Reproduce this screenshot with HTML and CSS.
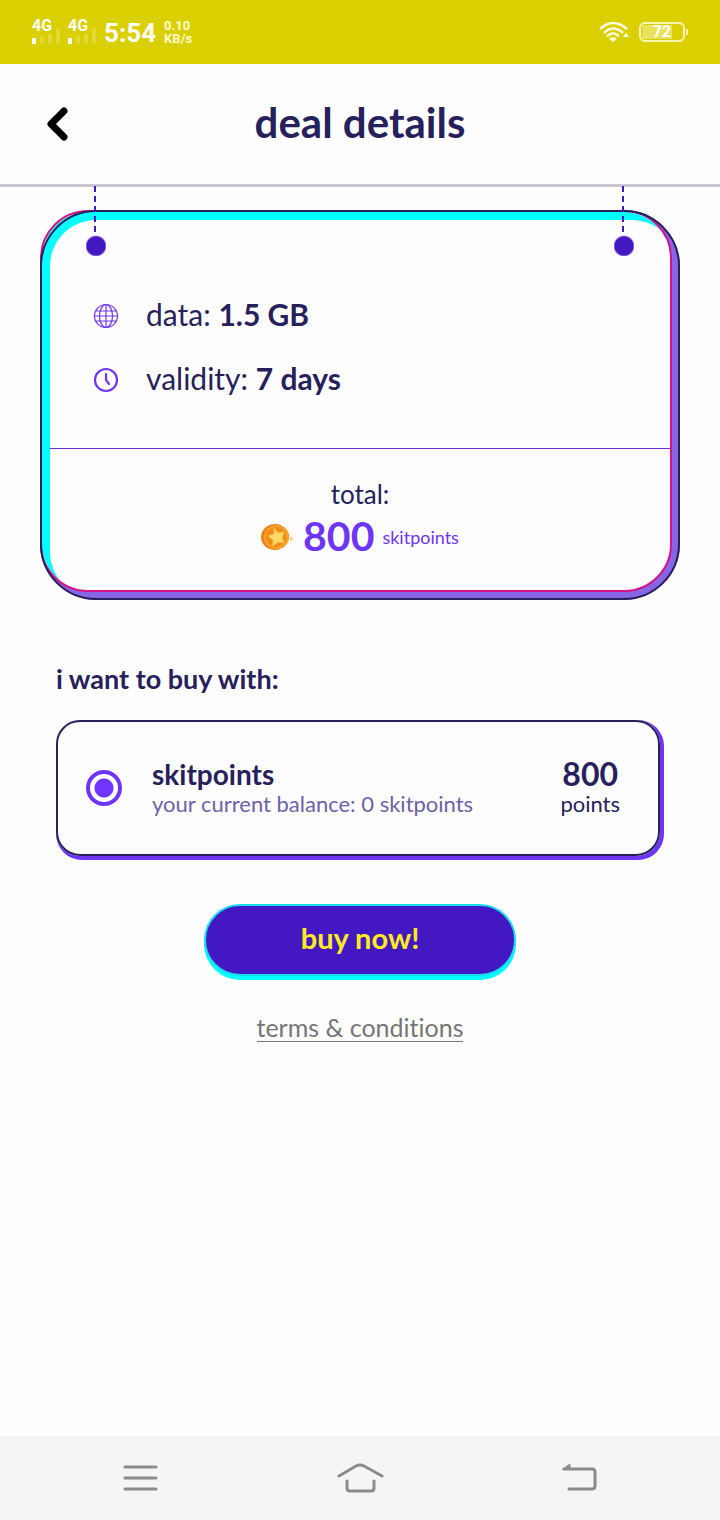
FILE: index.html
```
<!DOCTYPE html>
<html lang="en">
<head>
  <meta charset="UTF-8" />
  <meta name="viewport" content="width=device-width, initial-scale=1.0">
  <title>deal details</title>
  <link rel="stylesheet" href="styles.css">
</head>
<body>
  <div class="status-bar">
    <div class="status-left">
      <div class="signal">
        <span>4G</span>
        <svg width="28" height="18" viewBox="0 0 28 18" fill="#fff"><rect y="12" width="4" height="6"/><g opacity=".22"><rect x="8" y="10" width="4" height="8"/><rect x="16" y="8" width="4" height="10"/><rect x="24" y="2" width="4" height="16"/></g></svg>
      </div>
      <div class="signal">
        <span>4G</span>
        <svg width="28" height="18" viewBox="0 0 28 18" fill="#fff"><rect y="12" width="4" height="6"/><g opacity=".22"><rect x="8" y="10" width="4" height="8"/><rect x="16" y="8" width="4" height="10"/><rect x="24" y="2" width="4" height="16"/></g></svg>
      </div>
      <span class="clock">5:54</span>
      <span class="speed">0.10<br>KB/s</span>
    </div>
    <div class="status-right">
      <svg width="32" height="22" viewBox="0 0 32 22" fill="none" stroke="#fffde0" stroke-width="2.400">
        <path d="M1 8Q14 -4 28 8M5 12Q14 3 24 12M8 15.500Q14 9 20 15.500"/>
        <path d="M10 17.500Q14 15 18 17.500L14 21Z" fill="#fffde0" stroke="none"/>
        <path d="M24 16L27 11.500L30 16Z" fill="#fffde0" stroke="none"/>
      </svg>
      <div class="battery"><span>72</span></div>
    </div>
  </div>

  <header>
    <button class="back" aria-label="Back">
      <svg width="24" height="36" viewBox="0 0 24 36" fill="none" stroke="#000" stroke-width="7" stroke-linecap="round" stroke-linejoin="round"><path d="M20 5L7 18L20 31" /></svg>
    </button>
    <h1>deal details</h1>
  </header>

  <main>
    <section class="deal-card">
      <div class="pin pin-left"></div>
      <div class="pin pin-right"></div>
      <div class="deal-inner">
        <ul class="features">
          <li>
            <svg width="26" height="26" viewBox="0 0 26 26" fill="none" stroke="#6f35f5" stroke-width="1.200"><circle cx="13" cy="13" r="11.500"/><ellipse cx="13" cy="13" rx="6.500" ry="11.500"/><path d="M13 1.500V24.500M1.500 13H24.500M3 8H23M3 18H23"/></svg>
            <span>data: <strong>1.5 GB</strong></span>
          </li>
          <li>
            <svg width="26" height="26" viewBox="0 0 26 26" fill="none" stroke="#6f35f5" stroke-width="2.200" stroke-linecap="round"><circle cx="13" cy="13" r="11"/><path d="M13 7V13L16 17"/></svg>
            <span>validity: <strong>7 days</strong></span>
          </li>
        </ul>
        <div class="total">
          <p class="total-label">total:</p>
          <p class="total-price">
            <svg width="34" height="28" viewBox="0 0 34 28">
              <ellipse cx="14" cy="14" rx="14" ry="13" fill="#e8821a"/>
              <ellipse cx="15.500" cy="14" rx="12.500" ry="12" fill="#f8a22c"/>
              <ellipse cx="15" cy="14" rx="10" ry="10" fill="#ef8b18"/>
              <path d="M13 5L17 10L23 9L21 15L23 20L17 19L12 23L12 17L7 13L13 11Z" fill="#ffd966" stroke="#ffc247" stroke-width="1" stroke-linejoin="round"/>
              <path d="M19 26A13 12 0 0 0 28 17" fill="none" stroke="#fff0bd" stroke-width="1" stroke-dasharray="2 1"/>
              <path d="M30 13L31 15L33 16L31 17L30 19L29 17L28 16L29 15ZM29 10h1v1h-1Z" fill="#f3cf87"/>
            </svg>
            <strong>800</strong>
            <span>skitpoints</span>
          </p>
        </div>
      </div>
    </section>

    <form class="buy-form">
      <h2>i want to buy with:</h2>
      <label class="option">
        <input type="radio" name="method" value="skitpoints" checked>
        <span class="option-name"><strong>skitpoints</strong><small>your current balance: 0 skitpoints</small></span>
        <span class="option-cost"><strong>800</strong><small>points</small></span>
      </label>
      <button type="button" class="buy">buy now!</button>
      <a href="#" class="terms">terms &amp; conditions</a>
    </form>
  </main>

  <nav class="nav-bar">
    <button aria-label="Recent apps">
      <svg width="48" height="32" viewBox="0 0 48 32"><path d="M9 5H40M9 16H40M9 27H40"/></svg>
    </button>
    <button aria-label="Home">
      <svg width="48" height="32" viewBox="0 0 48 32"><path d="M3 14L20 4Q24 2 28 4L46 14M11 19V26Q11 29 14 29H35Q38 29 38 26V19"/></svg>
    </button>
    <button aria-label="Go back">
      <svg width="48" height="32" viewBox="0 0 48 32"><path d="M8 7H36Q39 7 39 10V24Q39 27 36 27H13"/><path class="arrow" d="M7 7L14 2V7Z"/></svg>
    </button>
  </nav>
</body>
</html>
```
FILE: styles.css
```
* {
  box-sizing: border-box;
}

body {
  margin: 0;
  min-height: 100vh;
  display: flex;
  flex-direction: column;
  background: #fefefe;
  color: #27215b;
  font-family: Lato, "Open Sans", sans-serif;
  font-variant-ligatures: none;
}

h1, h2, p, ul {
  margin: 0;
  padding: 0;
}

button {
  border: none;
  background: none;
  padding: 0;
  font-family: inherit;
  cursor: pointer;
}

svg {
  display: block;
  flex-shrink: 0;
}

/* status bar */
.status-bar {
  display: flex;
  justify-content: space-between;
  align-items: center;
  height: 64px;
  padding: 0 32px;
  background: #dacf00;
  color: #fff;
  font-family: Roboto, sans-serif;
  font-weight: bold;
}

.status-left, .status-right {
  display: flex;
  align-items: center;
  gap: 8px;
}

.signal {
  display: grid;
  height: 24px;
}

.signal span, .signal svg {
  grid-area: 1 / 1;
}

.signal span {
  font-size: 16px;
  line-height: 12px;
}

.signal svg {
  align-self: end;
}

.clock {
  padding-top: 2px;
  font-size: 26px;
  line-height: 32px;
}

.speed {
  font-size: 13px;
  line-height: 13px;
  color: #fffbc8;
}

.battery {
  position: relative;
  width: 46px;
  height: 20px;
  margin-right: 3px;
  border: 2px solid #f7f3b0;
  border-radius: 6px;
  background: linear-gradient(#e9e25e, #e9e25e) 1px 1px / 30px 14px no-repeat;
  font-size: 16px;
  line-height: 16px;
  text-align: center;
}

.battery::after {
  content: "";
  position: absolute;
  top: 5px;
  right: -5px;
  width: 2px;
  height: 6px;
  background: #f7f3b0;
}

/* header */
header {
  display: grid;
  grid-template-columns: 48px 1fr 48px;
  align-items: center;
  height: 123px;
  padding: 0 32px;
  border-bottom: 3px solid #cdc6d2;
}

.back {
  justify-self: center;
}

h1 {
  padding-bottom: 4px;
  font-size: 42px;
  line-height: 48px;
  text-align: center;
}

main {
  flex: 1;
  padding: 23px 40px;
}

/* deal card */
.deal-card {
  position: relative;
  padding: 0 8px 8px 0;
  border-radius: 56px;
  background: #8765e5;
}

.deal-card::after {
  content: "";
  position: absolute;
  inset: 0;
  border: 2px solid #27215b;
  border-radius: 56px;
  pointer-events: none;
}

.deal-inner {
  border: 2px solid #d41386;
  border-radius: 48px;
  background: #fefefe;
  box-shadow: inset 8px 8px #00ffff;
}

.pin {
  position: absolute;
  z-index: 1;
  top: -24px;
  width: 20px;
  height: 70px;
  background:
    radial-gradient(circle at 10px 60px, #4318c2 9px, transparent 11px),
    repeating-linear-gradient(#4318c2 0 6px, transparent 6px 10px) 8px 0 / 2px 46px no-repeat;
}

.pin-left {
  left: 46px;
}

.pin-right {
  right: 46px;
}

.features {
  display: flex;
  flex-direction: column;
  gap: 24px;
  margin-left: 8px;
  padding: 84px 43px 48px;
  border-bottom: 1px solid #6a2fc9;
  list-style: none;
}

.features li {
  display: flex;
  align-items: center;
  gap: 27px;
  font-size: 30px;
  line-height: 36px;
}

.features span {
  padding-bottom: 4px;
}

.total {
  padding: 27px 0 30px 8px;
}

.total-label {
  font-size: 26px;
  line-height: 36px;
  text-align: center;
}

.total-price {
  display: flex;
  justify-content: center;
  align-items: center;
  gap: 8px;
  color: #6f35f5;
}

.total-price svg {
  margin-top: 2px;
}

.total-price strong {
  font-size: 41px;
  line-height: 48px;
}

.total-price span {
  padding-top: 2px;
  font-size: 18px;
}

/* payment */
.buy-form {
  display: flex;
  flex-direction: column;
  align-items: center;
  padding: 63px 16px 0;
}

h2 {
  align-self: stretch;
  margin-bottom: 25px;
  font-size: 27px;
  line-height: 32px;
}

.option {
  display: flex;
  align-items: center;
  align-self: stretch;
  margin-right: 4px;
  padding: 36px 38px 36px 28px;
  border: 2px solid #27215b;
  border-radius: 24px;
  box-shadow: 2px 2px 0 2px #6f35f5;
}

.option input {
  appearance: none;
  width: 36px;
  height: 36px;
  margin: 0 30px 0 0;
  border: 4px solid #6f35f5;
  border-radius: 50%;
}

.option input:checked {
  background: radial-gradient(circle, #6f35ff 9px, transparent 10px);
}

.option-name {
  flex: 1;
}

.option-cost {
  text-align: center;
}

.option strong, .option small {
  display: block;
}

.option strong {
  font-size: 28px;
  line-height: 32px;
}

.option-cost strong {
  font-size: 32px;
}

.option small {
  font-size: 22px;
  line-height: 28px;
}

.option-name small {
  color: #6b62a8;
}

.buy {
  min-width: 312px;
  margin-top: 48px;
  padding: 16px 48px 20px;
  border: 2px solid #18dcf0;
  border-radius: 36px;
  background: #4318c2;
  box-shadow: 0 4px #00ffff;
  color: #ffec1f;
  font-size: 29px;
  font-weight: bold;
  line-height: 32px;
}

.terms {
  margin-top: 37px;
  border-bottom: 1px solid #757575;
  color: #757575;
  font-size: 25px;
  line-height: 28px;
  text-decoration: none;
}

/* navigation */
.nav-bar {
  display: flex;
  justify-content: space-between;
  align-items: center;
  height: 84px;
  padding: 0 116px;
  background: #f5f5f5;
}

.nav-bar svg {
  fill: none;
  stroke: #8b8b8b;
  stroke-width: 3;
  stroke-linecap: round;
}

.nav-bar .arrow {
  fill: #8b8b8b;
  stroke-width: 1;
}
```
